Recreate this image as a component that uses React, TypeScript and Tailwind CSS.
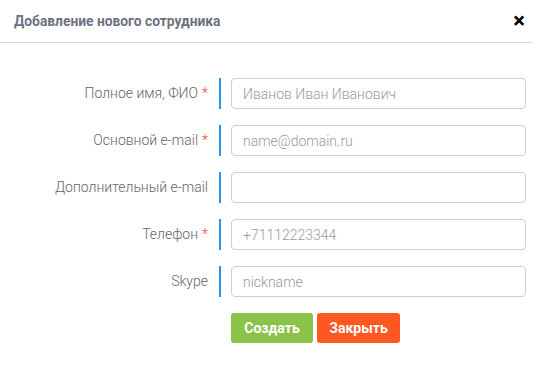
const fields = [
  { label: 'Полное имя, ФИО', required: true, placeholder: 'Иванов Иван Иванович' },
  { label: 'Основной e-mail', required: true, placeholder: 'name@domain.ru' },
  { label: 'Дополнительный e-mail', required: false, placeholder: '' },
  { label: 'Телефон', required: true, placeholder: '+71112223344' },
  { label: 'Skype', required: false, placeholder: 'nickname' },
];

export default function App() {
  return (
    <div className="w-[533px] h-[373px] bg-white font-['Roboto',sans-serif]">
      <div className="h-[43px] flex items-center justify-between pl-[14px] pr-[8px] border-b border-[#d5dde0]">
        <h2 className="text-[13.8px] font-bold text-[#6b7380]">Добавление нового сотрудника</h2>
        <button type="button" className="text-black text-[22px] font-bold leading-none">
          ×
        </button>
      </div>

      <form className="pt-[35px] flex flex-col gap-[16px]">
        {fields.map((f) => (
          <div key={f.label} className="flex items-center">
            <label className="w-[221px] h-[31px] pr-[11px] flex items-center justify-end border-r-2 border-[#2196f3] text-[14px] font-light text-[#666]">
              {f.label}
              {f.required && <span className="ml-[4px] text-[#f44336]">*</span>}
            </label>
            <input
              type="text"
              placeholder={f.placeholder}
              className="ml-[10px] w-[295px] h-[31px] px-[11px] border border-[#cfcfcf] rounded-[4px] text-[14px] font-light text-[#333] placeholder:text-[#9a9a9a] outline-none"
            />
          </div>
        ))}
        <div className="flex gap-[4px] pl-[231px]">
          <button
            type="button"
            className="w-[82px] h-[30px] rounded-[3px] bg-[#8bc34a] text-white text-[14px] font-bold"
          >
            Создать
          </button>
          <button
            type="button"
            className="w-[83px] h-[30px] rounded-[3px] bg-[#ff5722] text-white text-[14px] font-bold"
          >
            Закрыть
          </button>
        </div>
      </form>
    </div>
  );
}
